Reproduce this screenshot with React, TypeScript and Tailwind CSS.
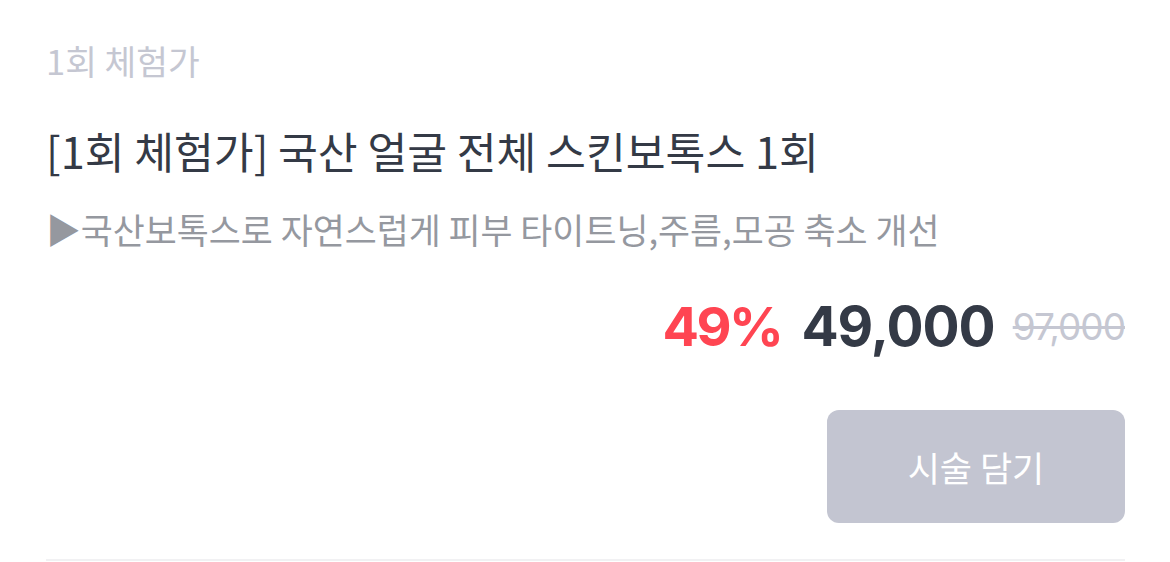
export default function App() {
  const kr = { fontFamily: '"Noto Sans CJK KR", "Noto Sans", sans-serif' };
  return (
    <div className="w-[1170px] h-[562px] bg-white overflow-hidden" style={kr}>
      <div className="pl-[46px] pr-[45px] pt-[40px] flex flex-col">
        <div className="text-[34.5px] leading-[40px] text-[#c5c7d2]">1회 체험가</div>
        <div className="mt-[45px] text-[43.3px] leading-[50px] text-[#343a46]">
          [1회 체험가] 국산 얼굴 전체 스킨보톡스 1회
        </div>
        <div className="mt-[33px] text-[34.8px] leading-[42px] text-[#95989f]">
          ▶국산보톡스로 자연스럽게 피부 타이트닝,주름,모공 축소 개선
        </div>
        <div
          className="mt-[44px] h-[64px] flex items-center justify-end"
          style={{ fontFamily: 'Inter, "Noto Sans", sans-serif' }}
        >
          <span className="text-[54px] font-bold text-[#ff4552] tracking-[-2.5px]">49%</span>
          <span className="ml-[20px] text-[55px] font-bold text-[#343a46] tracking-[-1px]">49,000</span>
          <span className="ml-[18px] text-[37px] text-[#c5c7d2] line-through tracking-[-1px] mt-[2px]">97,000</span>
        </div>
        <div className="mt-[52px] flex justify-end">
          <button className="w-[298px] h-[113px] rounded-[12px] bg-[#c3c5d1] text-white text-[35px] leading-[40px] flex items-center justify-center">
            시술 담기
          </button>
        </div>
        <div className="mt-[36px] h-[2px] bg-[#f1f1f3]" />
      </div>
    </div>
  );
}
